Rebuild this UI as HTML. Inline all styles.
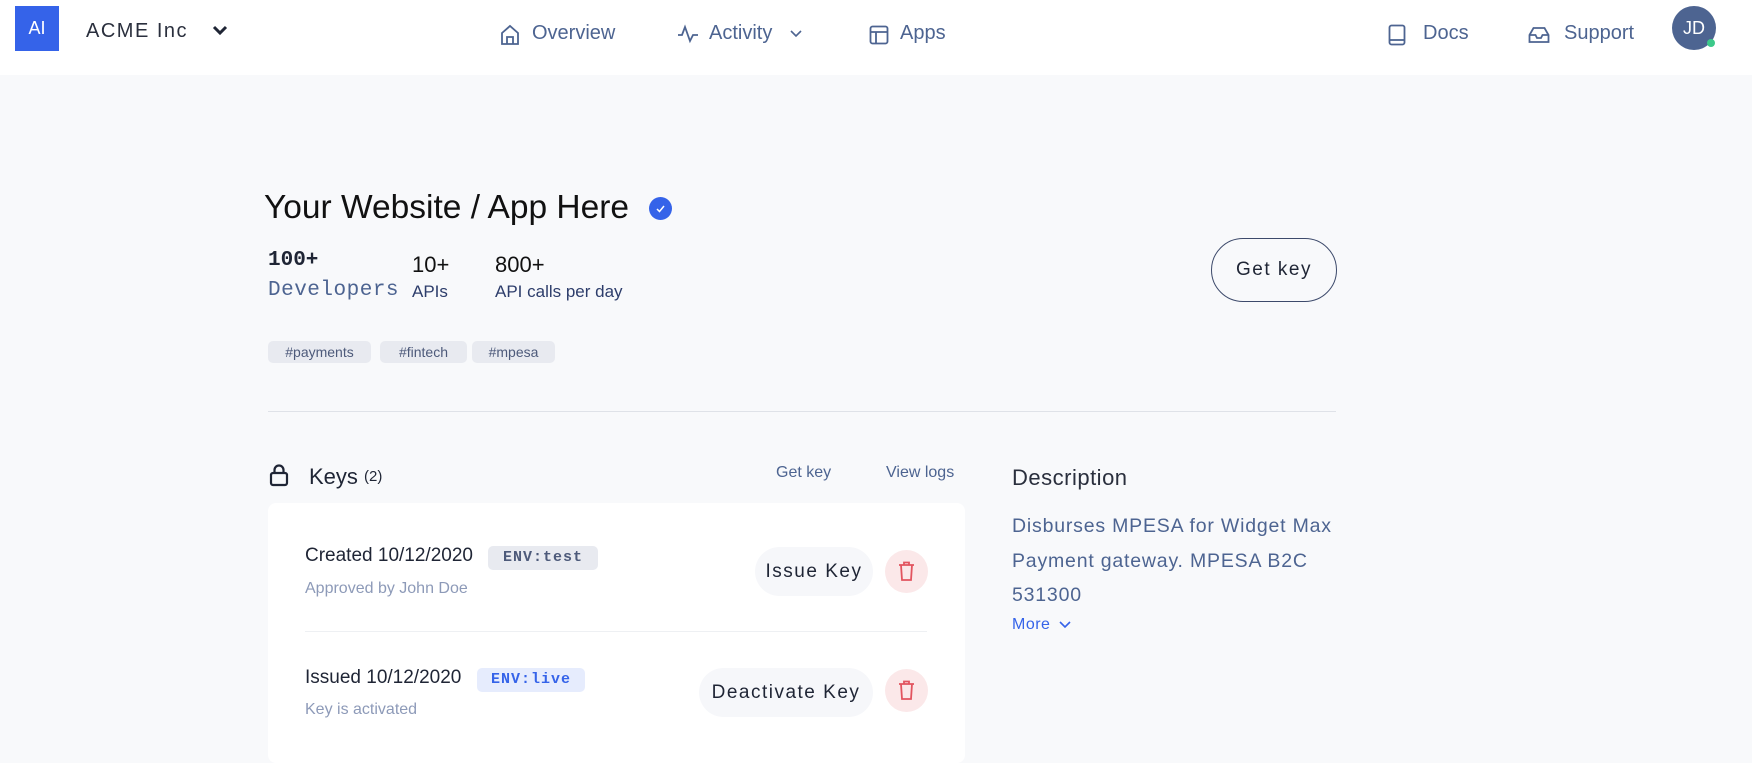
<!DOCTYPE html>
<html><head><meta charset="utf-8"><style>
*{margin:0;padding:0;box-sizing:border-box}
body{width:1752px;height:741px;overflow:hidden;background:#f8f9fb;font-family:"Liberation Sans",sans-serif;position:relative}
.a{position:absolute;white-space:nowrap}
.nav{position:absolute;left:0;top:0;width:1752px;height:75px;background:#fff}
.nl{color:#4d6491;font-size:20px;top:22px}
svg{position:absolute}
.tag{position:absolute;top:341px;height:22px;background:#e8eaf0;border-radius:5px;color:#4d5a7a;font-size:14px;line-height:22px;text-align:center}
.mono{font-family:"Liberation Mono",monospace}
.btn{position:absolute;background:#f6f7fa;border-radius:25px;color:#1f2535;font-size:19px;letter-spacing:1.5px;text-align:center}
.tr{position:absolute;width:43px;height:43px;border-radius:50%;background:#fbe8e9}
</style></head><body>
<div class="nav"></div>
<div class="a" style="left:15px;top:6px;width:44px;height:45px;background:#3563e9;color:#fff;font-size:18px;line-height:45px;text-align:center">AI</div>
<div class="a" style="left:86px;top:20px;font-size:20px;color:#2a2f3d;letter-spacing:1.5px">ACME Inc</div>
<svg style="left:212px;top:25px" width="16" height="12" viewBox="0 0 16 12"><path d="M2 2l6 6 6-6" fill="none" stroke="#1f2535" stroke-width="3"/></svg>

<svg style="left:500px;top:24px" width="20" height="22" viewBox="0 0 20 22"><path d="M2 9l8-7 8 7v11H2z M7 20v-7h6v7" fill="none" stroke="#4d6491" stroke-width="1.8"/></svg>
<div class="a nl" style="left:532px">Overview</div>
<svg style="left:677px;top:24px" width="22" height="20" viewBox="0 0 22 20"><path d="M1 11h4l3-8 5 14 3-6h5" fill="none" stroke="#4d6491" stroke-width="1.8"/></svg>
<div class="a nl" style="left:709px">Activity</div>
<svg style="left:790px;top:30px" width="12" height="8" viewBox="0 0 12 8"><path d="M1 1l5 5 5-5" fill="none" stroke="#4d6491" stroke-width="1.6"/></svg>
<svg style="left:869px;top:25px" width="20" height="20" viewBox="0 0 20 20"><rect x="1.5" y="1.5" width="17" height="17" rx="2" fill="none" stroke="#4d6491" stroke-width="1.8"/><path d="M1.5 7h17M7 7v11.5" stroke="#4d6491" stroke-width="1.8"/></svg>
<div class="a nl" style="left:900px">Apps</div>

<svg style="left:1388px;top:24px" width="18" height="22" viewBox="0 0 18 22"><rect x="1.5" y="1.5" width="15" height="19" rx="2" fill="none" stroke="#4d6491" stroke-width="1.8"/><path d="M1.5 16h15" stroke="#4d6491" stroke-width="1.8"/></svg>
<div class="a nl" style="left:1423px">Docs</div>
<svg style="left:1528px;top:26px" width="22" height="18" viewBox="0 0 22 18"><path d="M1.5 9l4-7h11l4 7v7h-19z M1.5 9h6l1.5 3h4l1.5-3h6" fill="none" stroke="#4d6491" stroke-width="1.8"/></svg>
<div class="a nl" style="left:1564px">Support</div>
<div class="a" style="left:1672px;top:6px;width:44px;height:44px;border-radius:50%;background:#4d6491;color:#fff;font-size:18px;line-height:44px;text-align:center">JD</div>
<div class="a" style="left:1707px;top:39px;width:8px;height:8px;border-radius:50%;background:#3cc98a"></div>

<div class="a" style="left:264px;top:189px;font-size:33.5px;color:#111">Your Website / App Here</div>
<div class="a" style="left:649px;top:197px;width:23px;height:23px;border-radius:50%;background:#3563e9"></div>
<svg style="left:654px;top:202px" width="13" height="13" viewBox="0 0 13 13"><path d="M3 7l2.5 2.5L10 4" fill="none" stroke="#fff" stroke-width="1.5"/></svg>

<div class="a mono" style="left:268px;top:249px;font-size:21px;font-weight:bold;color:#1f2535">100+</div>
<div class="a mono" style="left:268px;top:279px;font-size:21px;color:#4d6491;letter-spacing:0.5px">Developers</div>
<div class="a" style="left:412px;top:252px;font-size:22px;color:#111">10+</div>
<div class="a" style="left:412px;top:282px;font-size:17px;color:#2d3d6b">APIs</div>
<div class="a" style="left:495px;top:252px;font-size:22px;color:#111">800+</div>
<div class="a" style="left:495px;top:282px;font-size:17px;color:#2d3d6b">API calls per day</div>

<div class="a" style="left:1211px;top:238px;width:126px;height:64px;border:1.5px solid #3d4a6b;border-radius:32px;font-size:19px;color:#1f2535;letter-spacing:1.5px;line-height:61px;text-align:center">Get key</div>

<div class="tag" style="left:268px;width:103px">#payments</div>
<div class="tag" style="left:380px;width:87px">#fintech</div>
<div class="tag" style="left:472px;width:83px">#mpesa</div>

<div class="a" style="left:268px;top:411px;width:1068px;height:1px;background:#dfe2e8"></div>

<svg style="left:269px;top:463px" width="20" height="24" viewBox="0 0 20 24"><rect x="2" y="10" width="16" height="12" rx="2" fill="none" stroke="#1f2535" stroke-width="2.2"/><path d="M5.5 10V7a4.5 4.5 0 0 1 9 0v3" fill="none" stroke="#1f2535" stroke-width="2.2"/></svg>
<div class="a" style="left:309px;top:464px;font-size:22px;color:#1f2535">Keys</div>
<div class="a" style="left:364px;top:468px;font-size:15px;color:#1f2535">(2)</div>
<div class="a" style="left:776px;top:464px;font-size:16px;color:#4d6491">Get key</div>
<div class="a" style="left:886px;top:464px;font-size:16px;color:#4d6491">View logs</div>

<div class="a" style="left:268px;top:503px;width:697px;height:260px;background:#fff;border-radius:8px"></div>
<div class="a" style="left:305px;top:545px;font-size:19px;color:#1f2535">Created 10/12/2020</div>
<div class="a mono" style="left:488px;top:546px;width:110px;height:24px;background:#e8eaf0;border-radius:5px;font-size:15px;font-weight:bold;color:#4d5a7a;line-height:24px;text-align:center;letter-spacing:1px">ENV:test</div>
<div class="a" style="left:305px;top:580px;font-size:16px;color:#8d9ab8">Approved by John Doe</div>
<div class="btn" style="left:755px;top:547px;width:118px;height:49px;line-height:49px">Issue Key</div>
<div class="tr" style="left:885px;top:550px"></div>
<svg style="left:897px;top:560px" width="19" height="22" viewBox="0 0 19 22"><path d="M2 5h15M7 5V2.5h5V5M4 5l1 15h9l1-15" fill="none" stroke="#e2545f" stroke-width="1.8"/></svg>

<div class="a" style="left:305px;top:631px;width:622px;height:1px;background:#eef0f3"></div>

<div class="a" style="left:305px;top:667px;font-size:19px;color:#1f2535">Issued 10/12/2020</div>
<div class="a mono" style="left:477px;top:668px;width:108px;height:24px;background:#e6ecfd;border-radius:5px;font-size:15px;font-weight:bold;color:#3563e9;line-height:24px;text-align:center;letter-spacing:1px">ENV:live</div>
<div class="a" style="left:305px;top:701px;font-size:16px;color:#8d9ab8">Key is activated</div>
<div class="btn" style="left:699px;top:668px;width:174px;height:49px;line-height:49px">Deactivate Key</div>
<div class="tr" style="left:885px;top:669px"></div>
<svg style="left:897px;top:679px" width="19" height="22" viewBox="0 0 19 22"><path d="M2 5h15M7 5V2.5h5V5M4 5l1 15h9l1-15" fill="none" stroke="#e2545f" stroke-width="1.8"/></svg>

<div class="a" style="left:1012px;top:465px;font-size:22px;color:#2a2f3d;letter-spacing:0.5px">Description</div>
<div class="a" style="left:1012px;top:509px;font-size:19.5px;line-height:34.5px;color:#4d6491;letter-spacing:0.8px;white-space:normal;width:340px">Disburses MPESA for Widget Max<br>Payment gateway. MPESA B2C<br>531300</div>
<div class="a" style="left:1012px;top:616px;font-size:16px;color:#3563e9;letter-spacing:0.5px">More</div>
<svg style="left:1059px;top:621px" width="12" height="8" viewBox="0 0 12 8"><path d="M1 1l5 5 5-5" fill="none" stroke="#3563e9" stroke-width="1.6"/></svg>
</body></html>
